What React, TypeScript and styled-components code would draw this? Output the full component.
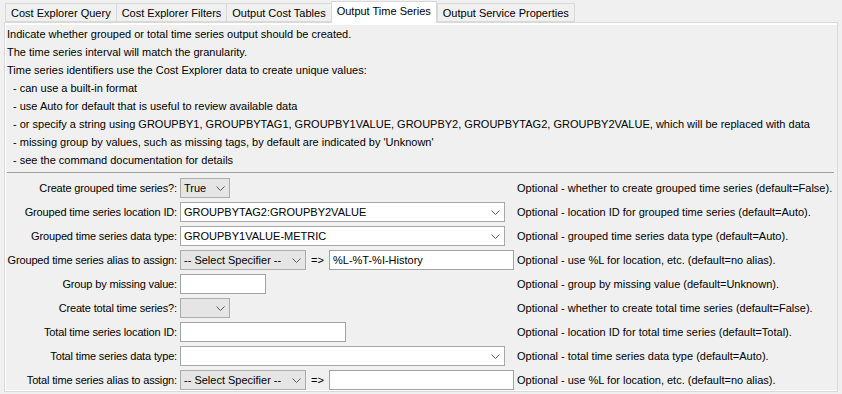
import { FC, Fragment } from 'react';
import styled, { createGlobalStyle } from 'styled-components';

const GlobalStyle = createGlobalStyle`
    body {
        margin: 0;
        background: #f0f0f0;
        font-family: "Liberation Sans", Arial, sans-serif;
        font-size: 11px;
        color: #000;
    }
`;

const Window = styled.div`
    width: 842px;
    height: 394px;
    box-sizing: border-box;
    padding: 0 4px 0 4px;
`;

const TabStrip = styled.div`
    display: flex;
    align-items: flex-end;
    height: 22px;
    padding-left: 1px;
`;

const Tab = styled.div<{ $active?: boolean }>`
    height: ${p => (p.$active ? '22px' : '19px')};
    box-sizing: border-box;
    padding: 0 5px;
    margin-right: ${p => (p.$active ? '0' : '-1px')};
    margin-bottom: ${p => (p.$active ? '-1px' : '0')};
    display: flex;
    align-items: center;
    padding-bottom: ${p => (p.$active ? '3px' : '0')};
    background: ${p => (p.$active ? '#fff' : '#f0f0f0')};
    border: 1px solid #d9d9d9;
    border-bottom: ${p => (p.$active ? 'none' : '1px solid #d9d9d9')};
    position: relative;
    z-index: ${p => (p.$active ? 1 : 0)};
    white-space: nowrap;
`;

const Panel = styled.div`
    height: 370px;
    box-sizing: border-box;
    border: 1px solid #d9d9d9;
    box-shadow: inset 0 2px 0 #fff, inset 1px 0 0 #fff, inset 0 -1px 0 #fff;
    padding: 3px 3px 0 2px;
`;

const InfoLine = styled.div<{ $indent?: boolean }>`
    height: 18px;
    line-height: 17px;
    padding-left: ${p => (p.$indent ? '6px' : '0')};
    white-space: nowrap;
`;

const Separator = styled.hr`
    border: none;
    border-top: 1px solid #a0a0a0;
    margin: 2px 0 5px 0;
`;

const FormGrid = styled.div`
    display: grid;
    grid-template-columns: 171px 334px 1fr;
    column-gap: 2px;
    row-gap: 4px;
    align-items: center;
`;

const Label = styled.div`
    text-align: right;
    white-space: nowrap;
    letter-spacing: -0.15px;
    padding-right: 1px;
`;

const Description = styled.div`
    white-space: nowrap;
    padding-left: 1px;
`;

const Controls = styled.div`
    display: flex;
    align-items: center;
    height: 20px;
`;

const Combo = styled.div<{ $width: number; $editable?: boolean }>`
    width: ${p => p.$width}px;
    height: 20px;
    box-sizing: border-box;
    background: ${p => (p.$editable ? '#fff' : '#e5e5e5')};
    border: 1px solid ${p => (p.$editable ? '#a8a8a8' : '#acacac')};
    display: flex;
    align-items: center;
    padding: 0 0 0 3px;
`;

const ComboText = styled.span`
    flex: 1;
    white-space: nowrap;
    overflow: hidden;
`;

const ChevronBox = styled.span`
    width: 17px;
    display: flex;
    justify-content: center;
    align-items: center;
`;

const TextField = styled.div<{ $width: number }>`
    width: ${p => p.$width}px;
    height: 20px;
    box-sizing: border-box;
    background: #fff;
    border: 1px solid #a3a3a3;
    padding: 0 3px;
    display: flex;
    align-items: center;
    white-space: nowrap;
`;

const Arrow = styled.span`
    width: 23px;
    text-align: center;
`;

const Chevron: FC = () => (
    <ChevronBox>
        <svg width="9" height="5" viewBox="0 0 9 5">
            <path d="M0.5 0.5 L4.5 4.5 L8.5 0.5" fill="none" stroke="#5a5a5a" strokeWidth="1" />
        </svg>
    </ChevronBox>
);

const SelectBox: FC<{ width: number; value?: string; editable?: boolean }> = ({ width, value, editable }) => (
    <Combo $width={width} $editable={editable}>
        <ComboText>{value}</ComboText>
        <Chevron />
    </Combo>
);

const AliasControls: FC<{ value?: string }> = ({ value }) => (
    <Controls>
        <SelectBox width={126} value="-- Select Specifier --" />
        <Arrow>=&gt;</Arrow>
        <TextField $width={185}>{value}</TextField>
    </Controls>
);

const tabs = [
    'Cost Explorer Query',
    'Cost Explorer Filters',
    'Output Cost Tables',
    'Output Time Series',
    'Output Service Properties',
];

const infoLines = [
    { text: 'Indicate whether grouped or total time series output should be created.' },
    { text: 'The time series interval will match the granularity.' },
    { text: 'Time series identifiers use the Cost Explorer data to create unique values:' },
    { text: '- can use a built-in format', indent: true },
    { text: '- use Auto for default that is useful to review available data', indent: true },
    {
        text: '- or specify a string using GROUPBY1, GROUPBYTAG1, GROUPBY1VALUE, GROUPBY2, GROUPBYTAG2, GROUPBY2VALUE, which will be replaced with data',
        indent: true,
    },
    { text: "- missing group by values, such as missing tags, by default are indicated by 'Unknown'", indent: true },
    { text: '- see the command documentation for details', indent: true },
];

const rows = [
    {
        label: 'Create grouped time series?:',
        control: <SelectBox width={50} value="True" />,
        desc: 'Optional - whether to create grouped time series (default=False).',
    },
    {
        label: 'Grouped time series location ID:',
        control: <SelectBox width={325} value="GROUPBYTAG2:GROUPBY2VALUE" editable />,
        desc: 'Optional - location ID for grouped time series (default=Auto).',
    },
    {
        label: 'Grouped time series data type:',
        control: <SelectBox width={325} value="GROUPBY1VALUE-METRIC" editable />,
        desc: 'Optional - grouped time series data type (default=Auto).',
    },
    {
        label: 'Grouped time series alias to assign:',
        control: <AliasControls value="%L-%T-%I-History" />,
        desc: 'Optional - use %L for location, etc. (default=no alias).',
    },
    {
        label: 'Group by missing value:',
        control: <TextField $width={86} />,
        desc: 'Optional - group by missing value (default=Unknown).',
    },
    {
        label: 'Create total time series?:',
        control: <SelectBox width={50} />,
        desc: 'Optional - whether to create total time series (default=False).',
    },
    {
        label: 'Total time series location ID:',
        control: <TextField $width={166} />,
        desc: 'Optional - location ID for total time series (default=Total).',
    },
    {
        label: 'Total time series data type:',
        control: <SelectBox width={325} editable />,
        desc: 'Optional - total time series data type (default=Auto).',
    },
    {
        label: 'Total time series alias to assign:',
        control: <AliasControls />,
        desc: 'Optional - use %L for location, etc. (default=no alias).',
    },
];

export default function App() {
    return (
        <>
            <GlobalStyle />
            <Window>
                <TabStrip>
                    {tabs.map(t => (
                        <Tab key={t} $active={t === 'Output Time Series'}>{t}</Tab>
                    ))}
                </TabStrip>
                <Panel>
                    {infoLines.map(l => (
                        <InfoLine key={l.text} $indent={l.indent}>{l.text}</InfoLine>
                    ))}
                    <Separator />
                    <FormGrid>
                        {rows.map(r => (
                            <Fragment key={r.label}>
                                <Label>{r.label}</Label>
                                <Controls>{r.control}</Controls>
                                <Description>{r.desc}</Description>
                            </Fragment>
                        ))}
                    </FormGrid>
                </Panel>
            </Window>
        </>
    );
}
